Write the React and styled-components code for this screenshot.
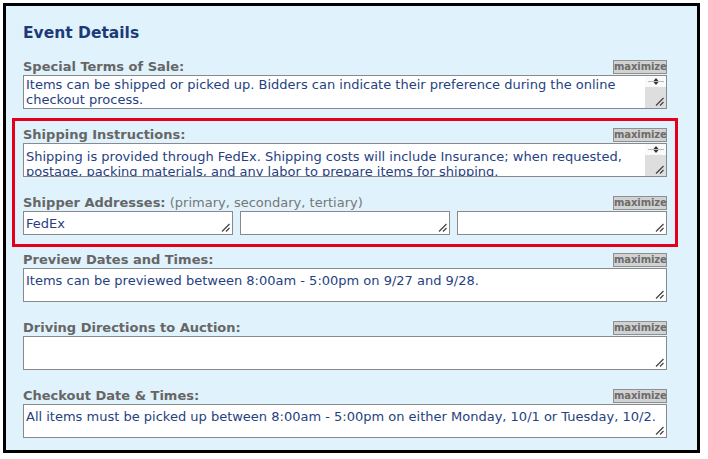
import React from 'react';
import styled, { createGlobalStyle } from 'styled-components';

const Global = createGlobalStyle`
  html, body { margin: 0; padding: 0; background: #fff; }
  body { font-family: "DejaVu Sans", Verdana, sans-serif; }
`;

const Frame = styled.div`
  box-sizing: border-box;
  margin: 3px 0 0 3px;
  width: 697px;
  height: 450px;
  border: 3px solid #000;
  background: #e0f2fc;
  padding: 18px 30px 0 17px;
`;

const Title = styled.h2`
  margin: 0 0 18px;
  font-size: 15.5px;
  line-height: 18px;
  font-weight: bold;
  color: #1d3a78;
`;

const Highlight = styled.div`
  margin: -10px -11px 6px;
  border: 3px solid #e2001a;
  padding: 7px 8px 9px;
`;

const Field = styled.div`
  margin-bottom: 19px;
  &:last-child { margin-bottom: 0; }
`;

const LabelRow = styled.div`
  display: flex;
  justify-content: space-between;
  align-items: flex-start;
  height: 15px;
`;

const Label = styled.span`
  font-size: 13px;
  line-height: 13px;
  font-weight: bold;
  color: #666;
  white-space: nowrap;
`;

const Hint = styled.span`
  font-weight: normal;
  color: #777;
`;

const MaxButton = styled.button`
  box-sizing: border-box;
  height: 14px;
  width: 54px;
  padding: 0;
  border: 1px solid #8f8f8f;
  background: #d2d2d2;
  color: #6c6c6c;
  font: bold 10px/12px "DejaVu Sans", Verdana, sans-serif;
  letter-spacing: -0.1px;
  cursor: pointer;
`;

const Box = styled.div`
  position: relative;
  box-sizing: border-box;
  height: ${p => p.$h || 34}px;
  border: 1px solid #8a8a8a;
  background: #fff;
  padding: ${p => p.$pt ?? 4}px ${p => (p.$scroll ? 24 : 3)}px 0 2px;
  font-size: 13px;
  line-height: 15px;
  color: #263f82;
  overflow: hidden;
`;

const Inputs = styled.div`
  display: grid;
  grid-template-columns: repeat(3, 1fr);
  gap: 7px;
`;

const Scrollbar = styled.div`
  position: absolute;
  top: 0;
  right: 0;
  bottom: 0;
  width: 21px;
  display: flex;
  flex-direction: column;
`;

const ArrowPart = styled.div`
  height: 11px;
  background: #fafafa;
  display: flex;
  align-items: center;
  justify-content: center;
`;

const Thumb = styled.div`
  flex: 1;
  background: #dedede;
`;

const GripWrap = styled.span`
  position: absolute;
  right: 2px;
  bottom: 2px;
  width: 9px;
  height: 9px;
  display: flex;
`;

const Grip = () => (
  <GripWrap>
    <svg width="9" height="9" viewBox="0 0 9 9">
      <line x1="1" y1="8.5" x2="8.5" y2="1" stroke="#444" strokeWidth="1.2" />
      <line x1="5" y1="8.5" x2="8.5" y2="5" stroke="#444" strokeWidth="1.2" />
    </svg>
  </GripWrap>
);

const Scroll = () => (
  <Scrollbar>
    <ArrowPart>
      <svg width="18" height="9" viewBox="0 0 18 9">
        <line x1="1" y1="4.5" x2="17" y2="4.5" stroke="#bbb" strokeWidth="1" />
        <polygon points="9,1 11.5,4 6.5,4" fill="#333" />
        <polygon points="9,8 11.5,5 6.5,5" fill="#333" />
      </svg>
    </ArrowPart>
    <Thumb />
  </Scrollbar>
);

const TextArea = ({ text, scroll, h, pt }) => (
  <Box $scroll={scroll} $h={h} $pt={pt}>
    {text}
    {scroll && <Scroll />}
    <Grip />
  </Box>
);

const Head = ({ label, hint }) => (
  <LabelRow>
    <Label>
      {label}
      {hint && <Hint> {hint}</Hint>}
    </Label>
    <MaxButton type="button">maximize</MaxButton>
  </LabelRow>
);

export default function App() {
  return (
    <>
      <Global />
      <Frame>
        <Title>Event Details</Title>
        <Field>
          <Head label="Special Terms of Sale:" />
          <TextArea scroll pt={1} text="Items can be shipped or picked up. Bidders can indicate their preference during the online checkout process." />
        </Field>
        <Highlight>
          <Field>
            <Head label="Shipping Instructions:" />
            <TextArea scroll pt={5} text="Shipping is provided through FedEx. Shipping costs will include Insurance; when requested, postage, packing materials, and any labor to prepare items for shipping." />
          </Field>
          <Field>
            <Head label="Shipper Addresses:" hint="(primary, secondary, tertiary)" />
            <Inputs>
              <TextArea h={24} pt={4} text="FedEx" />
              <TextArea h={24} pt={4} text="" />
              <TextArea h={24} pt={4} text="" />
            </Inputs>
          </Field>
        </Highlight>
        <Field>
          <Head label="Preview Dates and Times:" />
          <TextArea text="Items can be previewed between 8:00am - 5:00pm on 9/27 and 9/28." />
        </Field>
        <Field>
          <Head label="Driving Directions to Auction:" />
          <TextArea text="" />
        </Field>
        <Field>
          <Head label="Checkout Date & Times:" />
          <TextArea text="All items must be picked up between 8:00am - 5:00pm on either Monday, 10/1 or Tuesday, 10/2." />
        </Field>
      </Frame>
    </>
  );
}
